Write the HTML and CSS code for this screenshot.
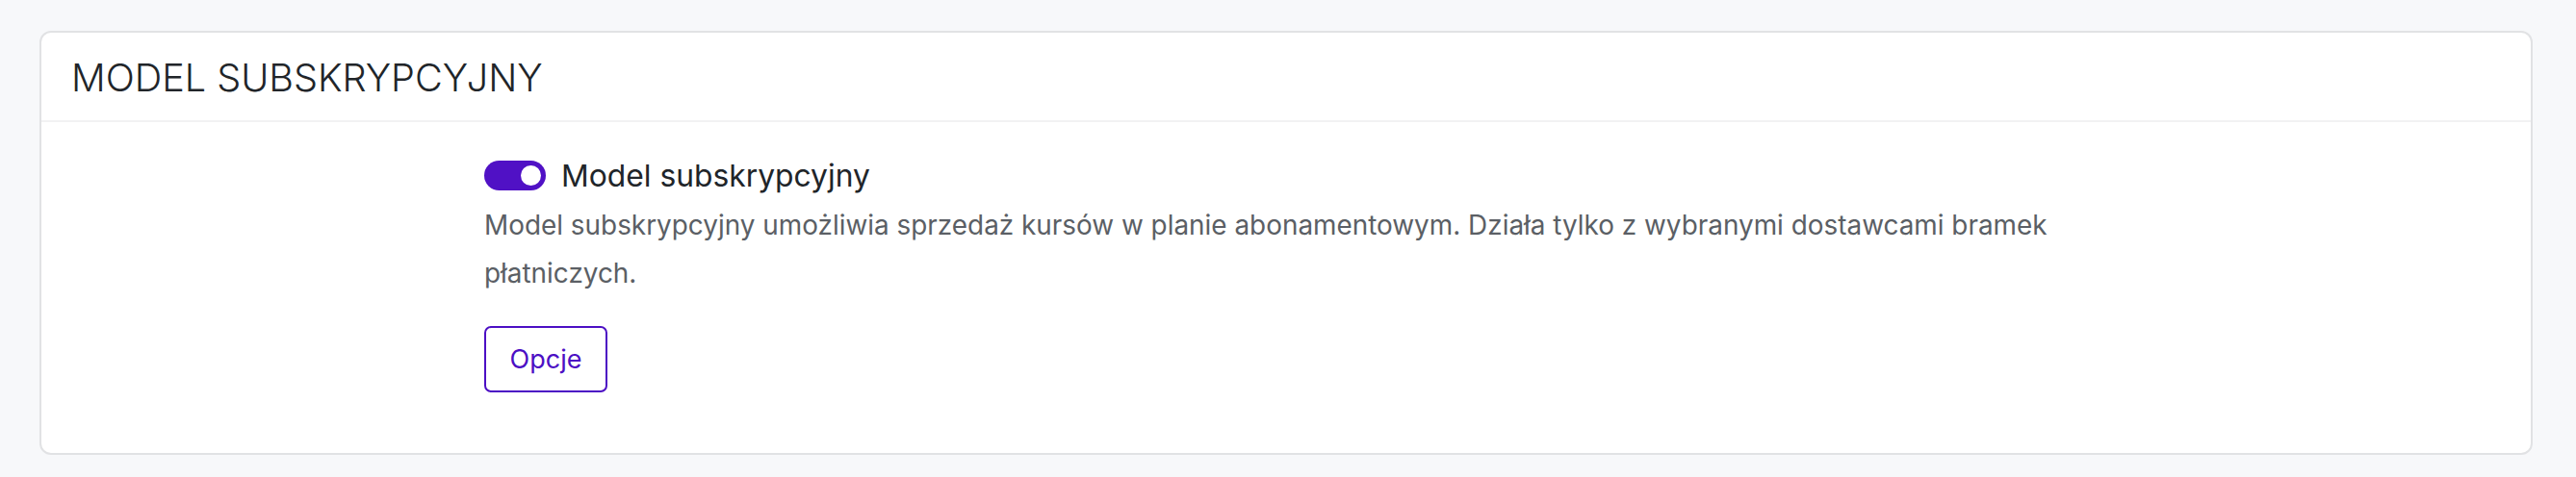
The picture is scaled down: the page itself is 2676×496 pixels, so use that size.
FILE: index.html
```html
<!DOCTYPE html>
<html lang="pl">
<head>
<meta charset="utf-8">
<title>Model subskrypcyjny</title>
<link rel="stylesheet" href="styles.css">
</head>
<body>
<div class="page">
  <section class="card">
    <header class="card-header">
      <h2 class="card-title">MODEL SUBSKRYPCYJNY</h2>
    </header>
    <div class="card-body">
      <div class="setting">
        <label class="switch-row">
          <span class="switch" role="switch" aria-checked="true"><span class="knob"></span></span>
          <span class="switch-label">Model subskrypcyjny</span>
        </label>
        <p class="help">Model subskrypcyjny umożliwia sprzedaż kursów w planie abonamentowym. Działa tylko z wybranymi dostawcami bramek płatniczych.</p>
        <div class="actions">
          <button class="btn-outline" type="button">Opcje</button>
        </div>
      </div>
    </div>
  </section>
</div>
</body>
</html>
```
FILE: styles.css
```css
* { box-sizing: border-box; }
html, body {
  margin: 0;
  padding: 0;
  background: #f7f8fa;
  font-family: Inter, "Noto Sans", "Liberation Sans", sans-serif;
}
.page {
  padding: 32px 45px 0 41px;
}
.card {
  background: #fff;
  border: 2px solid #e1e2e4;
  border-radius: 12px;
  height: 441px;
  display: flex;
  flex-direction: column;
}
.card-header {
  height: 93px;
  border-bottom: 2px solid #f2f2f3;
  display: flex;
  align-items: center;
  padding: 0 31px;
}
.card-title {
  margin: 0;
  font-size: 39.6px;
  font-weight: 300;
  color: #212529;
  letter-spacing: 0;
  line-height: 1.2;
  padding-top: 4px;
}
.card-body {
  padding: 40px 34px 0 460px;
}
.setting {
  max-width: 1700px;
  display: flex;
  flex-direction: column;
}
.switch-row {
  display: flex;
  align-items: center;
  gap: 16px;
  height: 31px;
}
.switch {
  width: 64px;
  height: 31px;
  border-radius: 16px;
  background: #5011c5;
  position: relative;
  flex: none;
}
.knob {
  position: absolute;
  right: 5px;
  top: 5px;
  width: 21px;
  height: 21px;
  border-radius: 50%;
  background: #fff;
}
.switch-label {
  font-size: 31.8px;
  color: #212529;
  line-height: 1;
}
.help {
  margin: 12px 0 0;
  font-size: 27.9px;
  line-height: 49.5px;
  color: #5b5f65;
}
.actions {
  margin-top: 30px;
}
.btn-outline {
  font-family: inherit;
  background: #fff;
  border: 2px solid #4c0fc4;
  color: #4c0fc4;
  border-radius: 7px;
  width: 128px;
  height: 69px;
  font-size: 27px;
  padding: 0;
  cursor: pointer;
}
```
